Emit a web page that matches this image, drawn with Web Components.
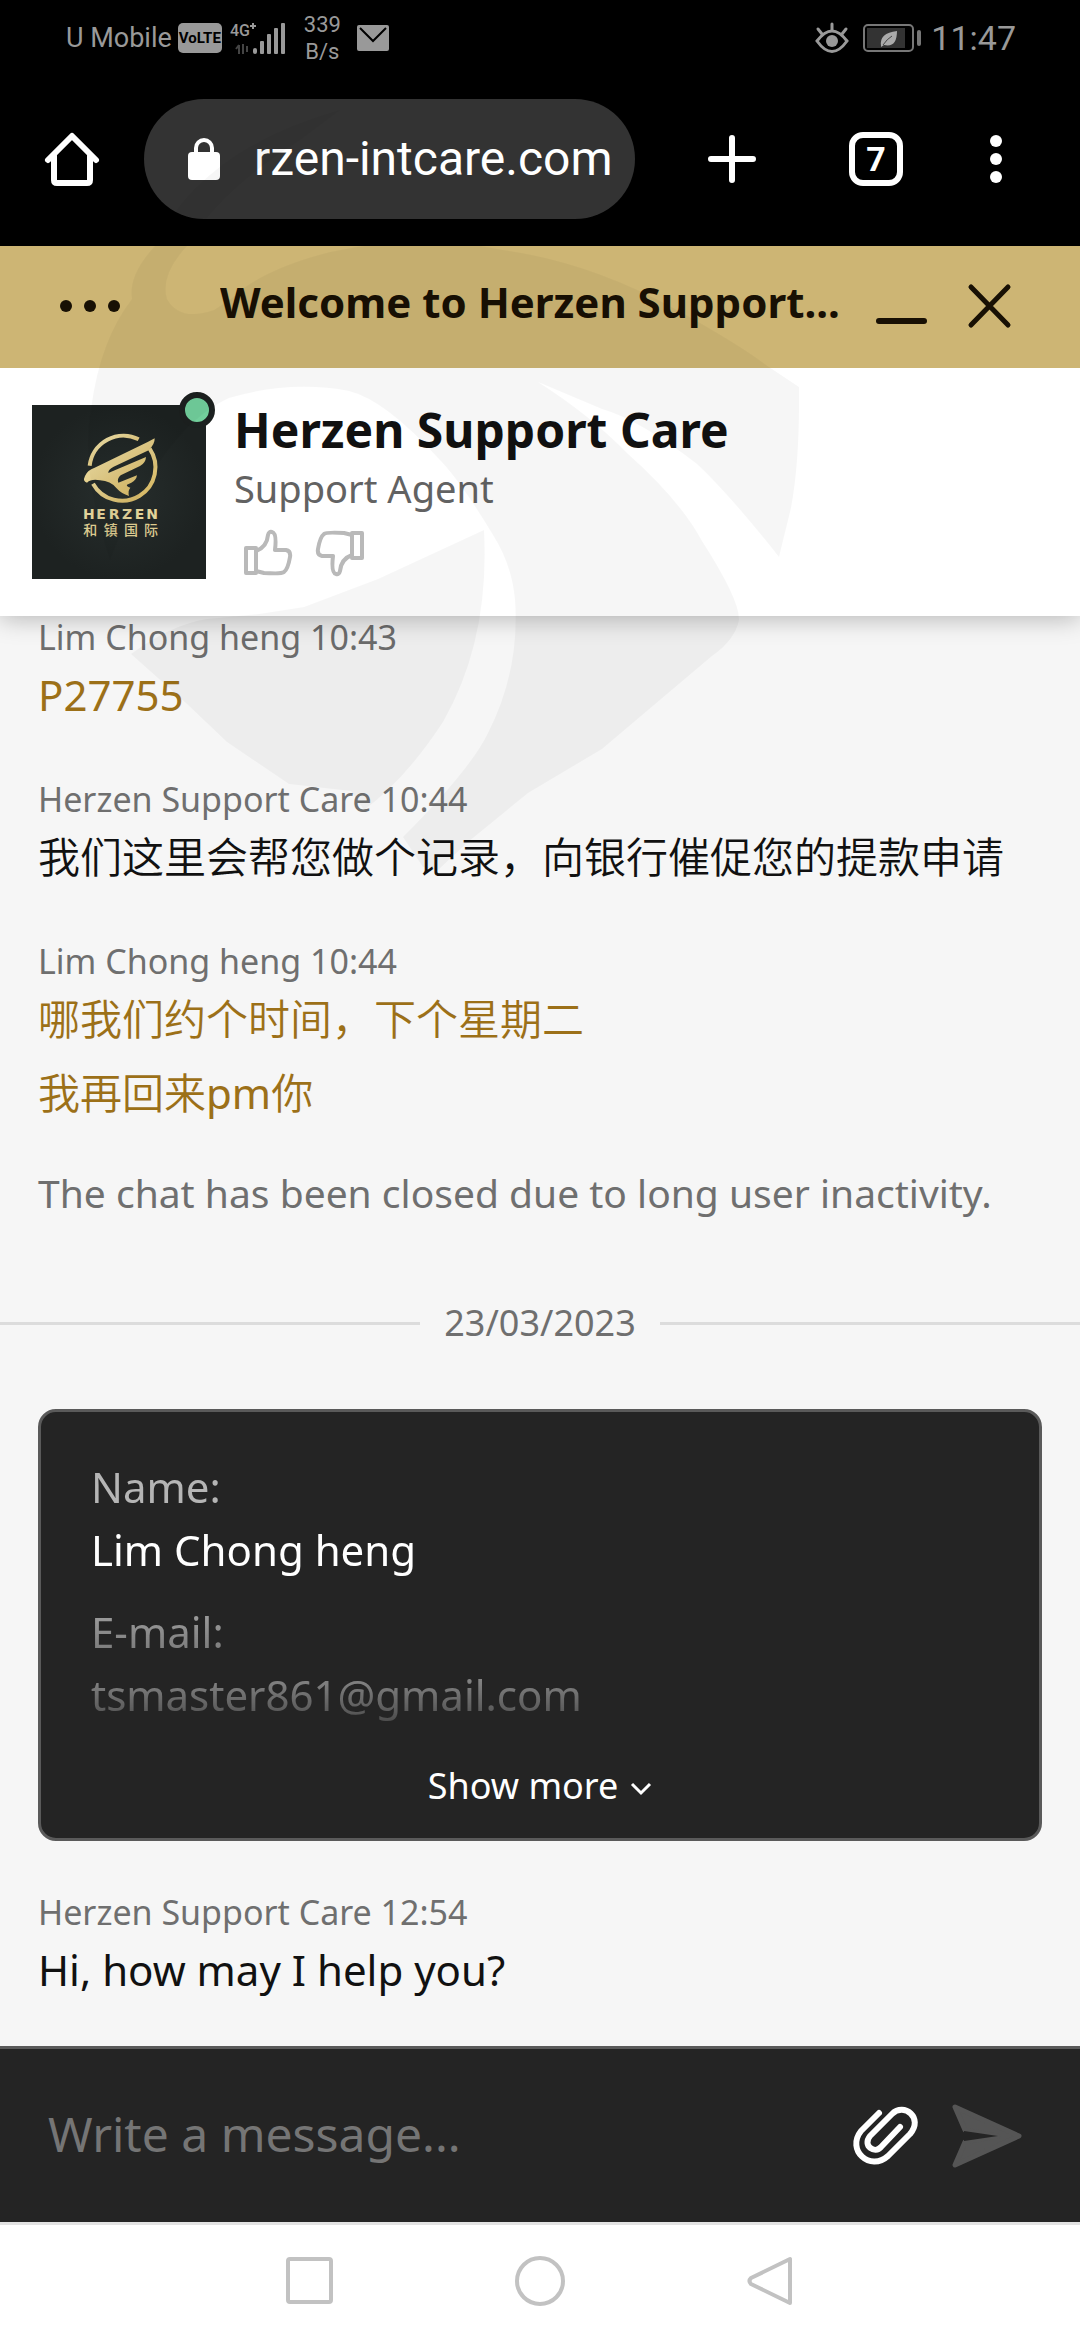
<!DOCTYPE html>
<html lang="en">
<head>
<meta charset="utf-8">
<meta name="viewport" content="width=device-width, initial-scale=1">
<title>Herzen Support Care</title>
<style>
  body {
    margin: 0;
    background: #f6f6f6;
    font-family: "Noto Sans", "Noto Sans CJK SC", sans-serif;
  }
  /* Chinese runs are set a little lighter than the Latin text beside them */
  p:lang(zh) { font-weight: 350; }
  p span:lang(en) { font-weight: 400; }
</style>
</head>
<body>
<support-page>
  <status-bar></status-bar>
  <browser-bar address="rzen-intcare.com" tabs="7"></browser-bar>
  <chat-titlebar>Welcome to Herzen Support...</chat-titlebar>
  <agent-card>
    <span slot="name">Herzen Support Care</span>
    <span slot="role">Support Agent</span>
  </agent-card>
  <chat-log>
    <chat-message author="Lim Chong heng" time="10:43" visitor><p>P27755</p></chat-message>
    <chat-message author="Herzen Support Care" time="10:44"><p lang="zh-CN">我们这里会帮您做个记录，向银行催促您的提款申请</p></chat-message>
    <chat-message author="Lim Chong heng" time="10:44" visitor><p lang="zh-CN">哪我们约个时间，下个星期二</p><p lang="zh-CN">我再回来<span lang="en">pm</span>你</p></chat-message>
    <chat-notice>The chat has been closed due to long user inactivity.</chat-notice>
    <date-divider>23/03/2023</date-divider>
    <details-card>
      <detail-field label="Name:">Lim Chong heng</detail-field>
      <detail-field label="E-mail:">tsmaster861@gmail.com</detail-field>
    </details-card>
    <chat-message author="Herzen Support Care" time="12:54"><p>Hi, how may I help you?</p></chat-message>
  </chat-log>
  <message-composer></message-composer>
  <nav-bar></nav-bar>
</support-page>

<script>
// Shared reset for every shadow root
const RESET = `
  :host, *, *::before, *::after { box-sizing: border-box; }
  button { display: block; margin: 0; padding: 0; border: none; background: none; color: inherit; font: inherit; }
  input { margin: 0; padding: 0; border: none; background: none; outline: none; min-width: 0; }
  svg { display: block; }
`;

class BaseElement extends HTMLElement {
  constructor() {
    super();
    this.attachShadow({ mode: 'open' });
  }

  connectedCallback() {
    this.shadowRoot.innerHTML = `<style>${RESET}${this.styles()}</style>${this.markup()}`;
  }

  styles() { return ''; }
  markup() { return '<slot></slot>'; }
}

/* Page frame, with the faint eagle emblem laid over the top part */
class SupportPage extends BaseElement {
  styles() {
    return `
      :host { display: flex; flex-direction: column; position: relative; min-height: 100vh; overflow: hidden; }
      .emblem { position: absolute; top: 0; left: 0; width: 100%; pointer-events: none; z-index: 2; }
    `;
  }

  markup() {
    return `
      <slot></slot>
      <svg class="emblem" viewBox="0 0 1080 900" fill="#000" fill-opacity="0.035" aria-hidden="true">
        <path d="M155 246 Q200 150 340 110 L300 140 Q220 190 187 246 Q160 275 167 299 Q180 322 214 310
          Q236 296 244 288 Q275 266 330 252 Q420 232 503 250 Q590 262 677 310 Q740 345 766 365 L799 387
          Q800 460 791 508 L779 557 Q730 495 697 464 Q640 420 602 409 L538 382 Q590 415 627 453
          Q680 500 702 541 Q740 600 739 620 Q735 640 712 656 L667 694 L602 749 L528 793 L468 842 L438 870
          L423 867 L403 837 Q470 770 488 733 Q520 670 515 600 Q512 565 493 535 Q460 480 438 458
          Q385 400 349 391 Q290 380 229 398 Q160 430 110 560 Q80 470 91 409 Q100 340 132 299
          Q128 275 155 246 Z"/>
        <path d="M484 530 Q490 640 443 722 Q405 780 364 810 L351 791 L289 784 L227 742 L186 703
          L131 654 Q170 625 207 619 L259 614 L304 607 L378 579 Z"/>
      </svg>
    `;
  }
}

class StatusBar extends BaseElement {
  styles() {
    return `
      :host { display: flex; justify-content: space-between; align-items: center; height: 75px;
        padding: 0 64px 0 66px; background: #000; color: #999; font-family: Roboto, sans-serif; }
      div { display: flex; align-items: center; }
      .carrier { font-size: 27px; line-height: 36px; }
      .volte { margin-left: 6px; width: 44px; border-radius: 5px; background: #999; color: #000;
        font-size: 15px; font-weight: 700; line-height: 30px; text-align: center; }
      .signal { margin-left: 8px; }
      .speed { margin-left: 18px; font-size: 22px; line-height: 27px; text-align: center; }
      .mail { margin-left: 16px; }
      .battery { margin: 0 10px 0 14px; }
      .time { font-size: 34px; line-height: 42px; }
    `;
  }

  markup() {
    return `
      <div>
        <span class="carrier">U Mobile</span>
        <span class="volte">VoLTE</span>
        <svg class="signal" width="56" height="36" viewBox="0 0 56 36" fill="#999">
          <text x="0" y="16" font-size="16" font-weight="500">4G</text>
          <path d="M20 6h6M23 3v6" stroke="#999" stroke-width="2"/>
          <path d="M9 25v9M9 25l-3 4M13 24v10M17 26v6" stroke="#444" stroke-width="2" fill="none"/>
          <rect x="23" y="28" width="4" height="6" rx="2"/>
          <rect x="30" y="21" width="4" height="13" rx="1"/>
          <rect x="37" y="14" width="4" height="20" rx="1"/>
          <rect x="44" y="8" width="4" height="26" rx="1"/>
          <rect x="51" y="3" width="4" height="31" rx="1"/>
        </svg>
        <span class="speed">339<br>B/s</span>
        <svg class="mail" width="32" height="28" viewBox="0 0 32 28">
          <rect y="1" width="32" height="26" rx="2" fill="#999"/>
          <path d="M3 4l13 13L29 4" fill="none" stroke="#000" stroke-width="2"/>
        </svg>
      </div>
      <div>
        <svg width="34" height="32" viewBox="0 0 34 32" fill="none" stroke="#999" stroke-width="3" stroke-linecap="round">
          <path d="M2 19Q17 -1 32 19Q17 40 2 19Z"/>
          <path d="M17 2v6M3 7l4 5M31 7l-4 5"/>
          <circle cx="17" cy="19" r="6" fill="#999" stroke="none"/>
        </svg>
        <svg class="battery" width="58" height="28" viewBox="0 0 58 28">
          <rect x="1" y="1" width="49" height="26" rx="4" fill="none" stroke="#777" stroke-width="2"/>
          <rect x="4" y="4" width="38" height="20" fill="#333"/>
          <path d="M18 22Q16 9 34 7Q34 24 21 21L18 23Z" fill="#aaa"/>
          <path d="M20 21Q24 15 29 12" stroke="#444" fill="none"/>
          <rect x="54" y="6" width="4" height="16" rx="2" fill="#777"/>
        </svg>
        <span class="time">11:47</span>
      </div>
    `;
  }
}

class BrowserBar extends BaseElement {
  styles() {
    return `
      :host { display: flex; align-items: center; height: 171px; padding: 0 77px 4px 42px;
        background: #000; color: #fff; font-family: Roboto, sans-serif; }
      .address { flex: 1; display: flex; align-items: center; gap: 34px; height: 120px; min-width: 0;
        margin: 0 70px 0 42px; padding: 0 22px 0 44px; border-radius: 60px; background: #333; }
      .address svg { flex: none; }
      input { flex: 1; height: 60px; color: #fff; font: 48px Roboto, sans-serif; }
      .tabs { width: 54px; height: 54px; margin: 0 86px 0 90px; border: 6px solid #fff; border-radius: 14px;
        font-size: 34px; font-weight: 700; line-height: 42px; text-align: center; }
    `;
  }

  markup() {
    return `
      <button aria-label="Home">
        <svg width="60" height="60" viewBox="0 0 60 60" fill="none" stroke="#fff" stroke-width="6" stroke-linecap="round" stroke-linejoin="round">
          <path d="M6 31L30 7l24 24"/><path d="M12 27v24q0 3 3 3h30q3 0 3-3V27"/>
        </svg>
      </button>
      <div class="address">
        <svg width="32" height="44" viewBox="0 0 32 44">
          <rect y="15" width="32" height="28" rx="4" fill="#fff"/>
          <path d="M8 17V11a8 8 0 0 1 16 0v6" fill="none" stroke="#fff" stroke-width="4"/>
        </svg>
        <input type="text" aria-label="Address" value="${this.getAttribute('address')}">
      </div>
      <button aria-label="New tab">
        <svg width="54" height="54" viewBox="0 0 54 54" stroke="#fff" stroke-width="6" stroke-linecap="round">
          <path d="M27 6v42M6 27h42"/>
        </svg>
      </button>
      <button class="tabs" aria-label="Open tabs">${this.getAttribute('tabs')}</button>
      <button aria-label="Menu">
        <svg width="14" height="54" viewBox="0 0 14 54" fill="#fff">
          <circle cx="7" cy="9" r="6"/><circle cx="7" cy="27" r="6"/><circle cx="7" cy="45" r="6"/>
        </svg>
      </button>
    `;
  }
}

class ChatTitlebar extends BaseElement {
  styles() {
    return `
      :host { display: flex; align-items: center; height: 122px; padding: 0 68px 2px 60px;
        background: #cdb574; color: #181004; }
      h1 { flex: 1; margin: 0 34px 8px 100px; font-size: 42px; line-height: 58px; white-space: nowrap; overflow: hidden; }
      .minimise { margin-right: 40px; }
    `;
  }

  markup() {
    return `
      <button aria-label="Options">
        <svg width="60" height="48" viewBox="0 0 60 48" fill="#181004">
          <circle cx="6" cy="24" r="6"/><circle cx="30" cy="24" r="6"/><circle cx="54" cy="24" r="6"/>
        </svg>
      </button>
      <h1><slot></slot></h1>
      <button class="minimise" aria-label="Minimise">
        <svg width="51" height="48" viewBox="0 0 51 48"><rect y="36" width="51" height="6" rx="3" fill="#181004"/></svg>
      </button>
      <button aria-label="Close">
        <svg width="45" height="48" viewBox="0 0 45 48" stroke="#181004" stroke-width="5" stroke-linecap="round">
          <path d="M4 5l37 38M41 5L4 43"/>
        </svg>
      </button>
    `;
  }
}

class AgentCard extends BaseElement {
  styles() {
    return `
      :host { display: flex; gap: 28px; height: 248px; padding: 32px 32px 0; background: #fff;
        box-shadow: 0 2px 24px rgba(0, 0, 0, 0.28); position: relative; z-index: 1; clip-path: inset(0 0 -40px); }
      .avatar { position: relative; flex: none; width: 174px; height: 174px; margin-top: 5px; background: #1e2423; }
      .online { position: absolute; top: -13px; right: -9px; width: 36px; height: 36px;
        border: 6px solid #1c2120; border-radius: 50%; background: #72cf9c; }
      .name { color: #111; font-size: 48px; font-weight: 700; line-height: 60px; }
      .role { color: #626262; font-size: 38px; line-height: 56px; }
      .votes { display: flex; gap: 22px; padding: 12px 0 0 9px; }
    `;
  }

  markup() {
    return `
      <div class="avatar">
        <svg width="174" height="174" viewBox="36 105 522 522" role="img" aria-label="Herzen logo">
          <defs>
            <linearGradient id="gold" x1="0" y1="0" x2="1" y2="1">
              <stop offset="0" stop-color="#f3e6b2"/><stop offset="1" stop-color="#d2b25a"/>
            </linearGradient>
            <radialGradient id="glow"><stop offset="0" stop-color="#272e2d"/><stop offset="1" stop-color="#1d2221"/></radialGradient>
          </defs>
          <rect x="36" y="105" width="522" height="522" fill="url(#glow)"/>
          <g fill="none" stroke="url(#gold)" stroke-width="12">
            <path d="M356 208A102 102 0 0 0 209 287"/>
            <path d="M219 341A100 100 0 1 0 389 236"/>
          </g>
          <path fill="url(#gold)" d="M404 205Q405 222 386 241L281 290Q264 298 265 309L378 261Q377 279 360 288L302 316
            Q290 327 295 338L351 316Q349 331 334 338L321 344Q318 349 331 353Q323 362 327 378Q304 371 289 354
            Q272 333 240 331Q214 326 201 338Q187 335 195 318Q202 300 224 293L383 216Z"/>
          <text x="189 229 266 306 344 379" y="448" font-family="DejaVu Sans" font-size="42" font-weight="700" fill="#e2d39a">HERZEN</text>
          <text x="190 251 312 372" y="494" font-family="Noto Sans CJK SC" font-size="42" font-weight="500" fill="#dccb90">和镇国际</text>
        </svg>
        <span class="online"></span>
      </div>
      <div>
        <div class="name"><slot name="name"></slot></div>
        <div class="role"><slot name="role"></slot></div>
        <div class="votes">
          ${this.thumb('Rate up', '')}
          ${this.thumb('Rate down', 'rotate(180 25 25)')}
        </div>
      </div>
    `;
  }

  thumb(label, transform) {
    return `
      <button aria-label="${label}">
        <svg width="50" height="50" viewBox="0 0 50 50" fill="none" stroke="#b9b9b9" stroke-width="4" stroke-linejoin="round">
          <g transform="${transform}">
            <path d="M3 20h10v25H3Z"/>
            <path d="M13 23q11-4 12-16q1-4 4-3q5 1 3 18h11q5 1 4 7q-2 12-6 15q-2 2-20 1q-4-1-8-2"/>
          </g>
        </svg>
      </button>
    `;
  }
}

class ChatLog extends BaseElement {
  styles() {
    return `:host { display: block; flex: 1; padding: 0 38px; background: #f6f6f6; }`;
  }
}

class ChatMessage extends BaseElement {
  styles() {
    return `
      :host { display: block; margin-top: 46px; color: #111; }
      :host(:first-child) { margin-top: 0; }
      :host([visitor]) { color: #9c7018; }
      header { color: #6f6f6f; font-size: 34px; line-height: 42px; }
      ::slotted(p) { margin: 0; font-size: 42px; line-height: 74px; }
    `;
  }

  markup() {
    return `<header>${this.getAttribute('author')} ${this.getAttribute('time')}</header><slot></slot>`;
  }
}

class ChatNotice extends BaseElement {
  styles() {
    return `:host { display: block; margin-top: 37px; color: #6f6f6f; font-size: 39px; line-height: 52px; white-space: nowrap; }`;
  }
}

class DateDivider extends BaseElement {
  styles() {
    return `
      :host { display: flex; align-items: center; gap: 24px; margin: 80px -38px 62px;
        color: #6f6f6f; font-size: 36px; line-height: 48px; }
      :host::before, :host::after { content: ""; flex: 1; height: 3px; background: #dcdcdc; }
    `;
  }
}

class DetailsCard extends BaseElement {
  styles() {
    return `
      :host { display: block; margin-bottom: 50px; padding: 43px 50px 28px;
        border: 3px solid #5a5a5a; border-radius: 18px; background: #242424; color: #fff; }
      .fields { display: flex; flex-direction: column; gap: 19px;
        -webkit-mask-image: linear-gradient(#000 48%, transparent 110%);
        mask-image: linear-gradient(#000 48%, transparent 110%); }
      button { display: flex; align-items: center; gap: 12px; margin: 36px auto 0; font-size: 36px; line-height: 48px; }
    `;
  }

  markup() {
    return `
      <div class="fields"><slot></slot></div>
      <button>Show more
        <svg width="22" height="22" viewBox="0 0 22 22" fill="none" stroke="#fff" stroke-width="3">
          <path d="M2 9l9 9 9-9"/>
        </svg>
      </button>
    `;
  }
}

class DetailField extends BaseElement {
  styles() {
    return `
      :host { display: block; font-size: 42px; line-height: 63px; }
      .label { color: #b5b5b5; }
    `;
  }

  markup() {
    return `<div class="label">${this.getAttribute('label')}</div><slot></slot>`;
  }
}

class MessageComposer extends BaseElement {
  styles() {
    return `
      :host { display: flex; align-items: center; height: 176px; padding: 0 58px 0 48px;
        border-top: 3px solid #5a5a5a; background: #242424; }
      input { flex: 1; height: 72px; margin-bottom: 4px; color: #fff; font: 48px "Noto Sans", sans-serif; }
      input::placeholder { color: #757575; opacity: 1; }
      .send { margin-left: 34px; }
    `;
  }

  markup() {
    return `
      <input type="text" placeholder="Write a message..." aria-label="Write a message">
      <button aria-label="Attach file">
        <svg width="66" height="60" viewBox="0 0 66 60" fill="none" stroke="#fff" stroke-width="6" stroke-linecap="round" stroke-linejoin="round">
          <path d="M27 7L9 25C-6 44 18 66 36 50L58 28C72 12 52-4 40 8L18 30C10 40 23 48 29 41L48 21"/>
        </svg>
      </button>
      <button class="send" aria-label="Send">
        <svg width="70" height="64" viewBox="0 0 70 64">
          <path d="M3 3L67 32L3 61L13 38L46 32L13 26Z" fill="#555" stroke="#555" stroke-width="5" stroke-linejoin="round"/>
          <path d="M12 27L46 32L12 37Z" fill="#242424"/>
        </svg>
      </button>
    `;
  }
}

class NavBar extends BaseElement {
  styles() {
    return `
      :host { display: flex; justify-content: center; align-items: center; gap: 180px; height: 118px; padding-bottom: 4px;
        border-top: 3px solid #e2e2e2; background: #fff; }
    `;
  }

  markup() {
    const shapes = {
      Recents: '<rect x="3" y="3" width="43" height="43" rx="2"/>',
      Home: '<circle cx="25" cy="25" r="23"/>',
      Back: '<path d="M45 3v44L6 28q-3-3 0-6Z"/>'
    };
    return Object.entries(shapes).map(([label, shape]) => `
      <button aria-label="${label}">
        <svg width="50" height="50" viewBox="0 0 50 50" fill="none" stroke="#c2c2c2" stroke-width="4" stroke-linejoin="round">${shape}</svg>
      </button>`).join('');
  }
}

customElements.define('support-page', SupportPage);
customElements.define('status-bar', StatusBar);
customElements.define('browser-bar', BrowserBar);
customElements.define('chat-titlebar', ChatTitlebar);
customElements.define('agent-card', AgentCard);
customElements.define('chat-log', ChatLog);
customElements.define('chat-message', ChatMessage);
customElements.define('chat-notice', ChatNotice);
customElements.define('date-divider', DateDivider);
customElements.define('details-card', DetailsCard);
customElements.define('detail-field', DetailField);
customElements.define('message-composer', MessageComposer);
customElements.define('nav-bar', NavBar);
</script>
</body>
</html>
